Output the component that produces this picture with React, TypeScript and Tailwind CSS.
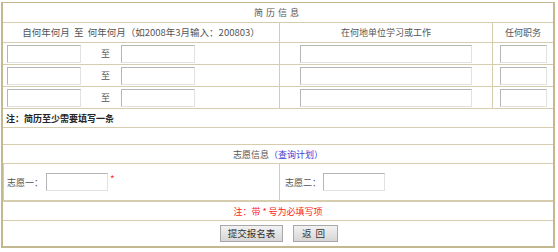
import React from 'react'

const line = 'border-[#d6cdaf]'

const TextBox = ({ className = '' }: { className?: string }) => (
    <input
        type="text"
        className={`h-[18px] border border-t-[#b5b5b5] border-l-[#b5b5b5] border-r-[#e2e2e2] border-b-[#e2e2e2] bg-white outline-none ${className}`}
    />
)

const ResumeRow = () => (
    <div className={`flex h-[22px] border-b ${line}`}>
        <div className={`flex w-[277px] items-center border-r pl-[4px] ${line}`}>
            <TextBox className="w-[74px]" />
            <span className="ml-[20px] mr-[11px] w-[9px]">至</span>
            <TextBox className="w-[74px]" />
        </div>
        <div className={`flex w-[213px] items-center justify-center border-r ${line}`}>
            <TextBox className="w-[172px]" />
        </div>
        <div className="flex flex-1 items-center justify-center">
            <TextBox className="w-[47px]" />
        </div>
    </div>
)

export default function App() {
    return (
        <div
            className="h-[252px] w-[558px] bg-white pt-[2px] pl-[1px] text-[9px] leading-none text-[#555]"
            style={{ fontFamily: '"Noto Sans CJK SC", "Noto Sans", sans-serif' }}
        >
            <div className="w-[554px] border-t border-l-2 border-r-2 border-b-2 border-[#c4b891]">
                <div className={`flex h-[20px] items-center justify-center border-b ${line} tracking-[3px]`}>
                    简历信息
                </div>

                <div className={`flex h-[20px] border-b ${line}`}>
                    <div className={`flex w-[277px] items-center justify-center whitespace-nowrap border-r ${line} text-[9.5px]`}>
                        自何年何月&nbsp; 至&nbsp; 何年何月（如2008年3月输入：200803）
                    </div>
                    <div className={`flex w-[213px] items-center justify-center border-r ${line}`}>
                        在何地单位学习或工作
                    </div>
                    <div className="flex flex-1 items-center justify-center">任何职务</div>
                </div>

                <ResumeRow />
                <ResumeRow />
                <ResumeRow />

                <div className={`flex h-[19px] items-center border-b pl-[3px] font-bold text-[#222] ${line}`}>
                    注：简历至少需要填写一条
                </div>
                <div className={`h-[17px] border-b ${line}`} />

                <div className={`flex h-[19px] items-center justify-center border-b ${line}`}>
                    志愿信息<span className="text-[#3c3cd6]">（查询计划）</span>
                </div>

                <div className={`flex h-[38px] border-b-2 ${line}`}>
                    <div className={`flex w-[277px] items-center border-r border-l ${line} pl-[3px]`}>
                        志愿一：
                        <TextBox className="ml-[3px] w-[62px]" />
                        <span className="ml-[2px] -mt-[6px] text-[10px] text-[#f33]">*</span>
                    </div>
                    <div className="flex flex-1 items-center pl-[5px]">
                        志愿二：
                        <TextBox className="ml-[2px] w-[62px]" />
                    </div>
                </div>

                <div className={`flex h-[19px] items-center justify-center border-b text-[#f22] ${line}`}>
                    注：带 * 号为必填写项
                </div>

                <div className="flex h-[25px] items-center justify-center gap-[10px] pl-[2px]">
                    <button className="h-[17px] w-[63px] border border-[#a8a8a8] bg-gradient-to-b from-[#f2f2f2] to-[#d6d6d6] text-[9.5px] text-[#333]">
                        提交报名表
                    </button>
                    <button className="h-[17px] w-[45px] border border-[#a8a8a8] bg-gradient-to-b from-[#f2f2f2] to-[#d6d6d6] text-[9.5px] text-[#333] tracking-[4px]">
                        返回
                    </button>
                </div>
            </div>
        </div>
    )
}
